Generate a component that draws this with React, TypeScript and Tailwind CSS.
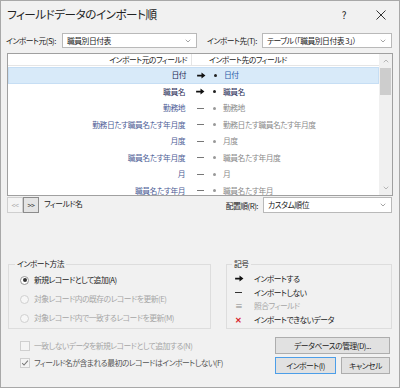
import { ChevronDown, ChevronUp } from 'lucide-react';

const rows = [
  { src: '日付', dst: '日付', on: true, sel: true },
  { src: '職員名', dst: '職員名', on: true },
  { src: '勤務地', dst: '勤務地' },
  { src: '勤務日たす職員名たす年月度', dst: '勤務日たす職員名たす年月度' },
  { src: '月度', dst: '月度' },
  { src: '職員名たす年月度', dst: '職員名たす年月度' },
  { src: '月', dst: '月' },
  { src: '職員名たす年月', dst: '職員名たす年月' },
];

const ImportArrow = () => (
  <svg viewBox="0 0 10 8" className="w-[9px] h-[7px]">
    <path d="M0 3h5V0.5L9.5 4 5 7.5V5H0z" fill="#111" />
  </svg>
);

const Combo = ({ text, className = '' }: { text: string; className?: string }) => (
  <div className={`h-[15px] bg-white border border-[#b9b9b9] flex items-center pl-[4px] pr-[4px] ${className}`}>
    <span className="flex-1">{text}</span>
    <ChevronDown className="w-[8px] h-[8px] text-[#777]" strokeWidth={2} />
  </div>
);

export default function App() {
  return (
    <div className="w-[400px] h-[388px] bg-[#f1f1f1] border border-[#a8a8a8] text-[7.8px] leading-none tracking-[-0.5px] whitespace-nowrap text-[#222] font-['Noto_Sans_CJK_JP',sans-serif] [font-feature-settings:'palt'] flex flex-col overflow-hidden">
      {/* ── Title ── */}
      <div className="h-[28px] flex items-center pl-[6px] pr-[13px] shrink-0">
        <span className="text-[11.6px] tracking-[-0.5px] flex-1">フィールドデータのインポート順</span>
        <span className="text-[10px] mr-[30px]">?</span>
        <svg viewBox="0 0 10 10" className="w-[10px] h-[10px]">
          <path d="M0.5 0.5l9 9M9.5 0.5l-9 9" stroke="#333" strokeWidth="1" />
        </svg>
      </div>

      {/* ── Source / destination ── */}
      <div className="flex items-center mt-[4px] pl-[5px] pr-[7px] shrink-0">
        <span className="w-[56px]">インポート元(S):</span>
        <Combo text="職員別日付表" className="w-[135px]" />
        <span className="ml-[10px] w-[55px]">インポート先(T):</span>
        <Combo text="テーブル（「職員別日付表 3」）" className="flex-1" />
      </div>

      {/* ── Field list ── */}
      <div className="mx-[6px] mt-[5px] h-[143px] bg-white border border-[#a0a0a0] flex shrink-0">
        <div className="flex-1 flex flex-col overflow-hidden">
          <div className="h-[12px] flex items-center border-b border-[#e5e5e5] shrink-0">
            <div className="w-[184px] pr-[4px] border-r border-[#e5e5e5] h-full flex items-center justify-end">インポート元のフィールド</div>
            <div className="pl-[17px]">インポート先のフィールド</div>
          </div>
          <div className="flex flex-col pt-[1px]">
            {rows.map(r => (
              <div key={r.src}
                className={`h-[16.5px] shrink-0 flex items-center ${r.sel ? 'bg-[#d8eaf9] border border-[#c6def4]' : ''}`}>
                <div className={`w-[177px] text-right ${r.on ? 'text-[#1f2a55]' : 'text-[#4d5d96]'}`}>{r.src}</div>
                <div className="ml-[6px] w-[18px] flex justify-center">
                  {r.on ? <ImportArrow /> : <span className="w-[7px] h-px bg-[#777]" />}
                </div>
                <div className="w-[10px] flex justify-center">
                  <span className={`w-[3px] h-[3px] rounded-full ${r.on ? 'bg-[#222]' : 'bg-[#999]'}`} />
                </div>
                <div className={`pl-[4px] ${r.sel ? 'text-[#2d5aa8]' : r.on ? 'text-[#1f2a55]' : 'text-[#8a8a8a]'}`}>{r.dst}</div>
              </div>
            ))}
          </div>
        </div>
        {/* scrollbar */}
        <div className="w-[13px] bg-[#f0f0f0] flex flex-col items-center shrink-0">
          <ChevronUp className="w-[8px] h-[8px] text-[#999] mt-[3px]" strokeWidth={2} />
          <div className="w-[11px] h-[27px] bg-[#cdcdcd] mt-[3px]" />
          <div className="flex-1" />
          <ChevronDown className="w-[8px] h-[8px] text-[#999] mb-[3px]" strokeWidth={2} />
        </div>
      </div>

      {/* ── Nav + order ── */}
      <div className="flex items-start mt-[1px] pl-[6px] pr-[7px] shrink-0">
        <div className="w-[16px] h-[16px] border border-[#cfcfcf] bg-[#f4f4f4] text-[#aaa] flex items-center justify-center text-[7px]">&lt;&lt;</div>
        <div className="w-[16px] h-[16px] border border-[#8c8c8c] bg-[#e4e4e4] text-[#333] flex items-center justify-center text-[7px]">&gt;&gt;</div>
        <span className="ml-[5px] mt-[3px]">フィールド名</span>
        <div className="flex-1" />
        <span className="mt-[5px] mr-[5px]">配置順(R):</span>
        <Combo text="カスタム順位" className="w-[129px] h-[16px]" />
      </div>

      {/* ── Groups ── */}
      <div className="flex mt-[51px] pl-[7px] pr-[7px] gap-[15px] shrink-0">
        <div className="w-[203px] h-[65px] border border-[#dddddd] flex flex-col pl-[11px]">
          <span className="-mt-[5px] -ml-[5px] w-fit px-[2px] bg-[#f1f1f1]">インポート方法</span>
          <div className="flex flex-col gap-[10px] mt-[8px]">
            <div className="flex items-center gap-[5px]">
              <span className="w-[9px] h-[9px] rounded-full border border-[#999] bg-white flex items-center justify-center">
                <span className="w-[4px] h-[4px] rounded-full bg-[#333]" />
              </span>
              <span>新規レコードとして追加(A)</span>
            </div>
            <div className="flex items-center gap-[5px] text-[#a6a6a6]">
              <span className="w-[9px] h-[9px] rounded-full border border-[#d0d0d0] bg-[#f6f6f6]" />
              <span>対象レコード内の既存のレコードを更新(E)</span>
            </div>
            <div className="flex items-center gap-[5px] text-[#a6a6a6]">
              <span className="w-[9px] h-[9px] rounded-full border border-[#d0d0d0] bg-[#f6f6f6]" />
              <span>対象レコード内で一致するレコードを更新(M)</span>
            </div>
          </div>
        </div>
        <div className="flex-1 h-[65px] border border-[#dddddd] flex flex-col pl-[8px]">
          <span className="-mt-[5px] -ml-[3px] w-fit px-[2px] bg-[#f1f1f1]">記号</span>
          <div className="flex flex-col gap-[6px] mt-[7px]">
            <div className="flex items-center"><span className="w-[19px]"><ImportArrow /></span>インポートする</div>
            <div className="flex items-center"><span className="w-[19px]"><span className="block w-[7px] h-px bg-[#333]" /></span>インポートしない</div>
            <div className="flex items-center text-[#a6a6a6]"><span className="w-[19px] text-[#888]">≡</span>照合フィールド</div>
            <div className="flex items-center"><span className="w-[19px] text-[#d9262c] font-bold">✕</span>インポートできないデータ</div>
          </div>
        </div>
      </div>

      {/* ── Options + buttons ── */}
      <div className="flex mt-[8px] pl-[19px] pr-[9px] shrink-0">
        <div className="flex-1 flex flex-col gap-[7px] mt-[4px]">
          <div className="flex items-center gap-[4px] text-[#a6a6a6]">
            <span className="w-[10px] h-[10px] border border-[#cfcfcf] bg-[#f4f4f4]" />
            <span>一致しないデータを新規レコードとして追加する(N)</span>
          </div>
          <div className="flex items-center gap-[4px] text-[#555]">
            <span className="w-[10px] h-[10px] border border-[#cfcfcf] bg-[#f4f4f4] flex items-center justify-center">
              <svg viewBox="0 0 10 10" className="w-[8px] h-[8px]"><path d="M1.5 5.2l2.3 2.4L8.6 2" fill="none" stroke="#777" strokeWidth="1.3" /></svg>
            </span>
            <span>フィールド名が含まれる最初のレコードはインポートしない(F)</span>
          </div>
        </div>
        <div className="flex flex-col gap-[3px] w-[115px]">
          <div className="h-[17px] border border-[#adadad] bg-[#e1e1e1] flex items-center justify-center">データベースの管理(D)...</div>
          <div className="flex gap-[5px]">
            <div className="w-[61px] h-[17px] border border-[#4c9ee8] bg-[#e1e1e1] flex items-center justify-center">インポート(I)</div>
            <div className="flex-1 h-[17px] border border-[#adadad] bg-[#e1e1e1] flex items-center justify-center">キャンセル</div>
          </div>
        </div>
      </div>
    </div>
  );
}
